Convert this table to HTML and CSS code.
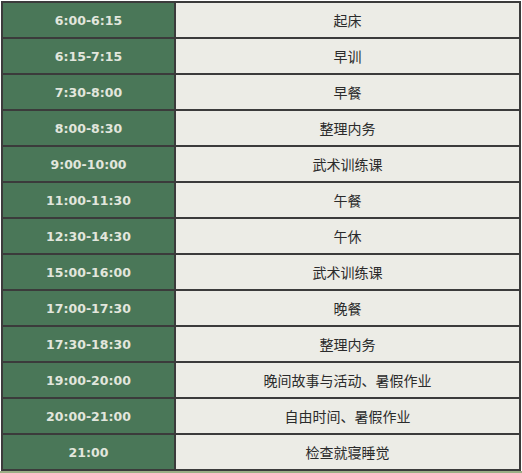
FILE: index.html
```html
<!DOCTYPE html>
<html lang="zh">
<head>
<meta charset="utf-8">
<link rel="stylesheet" href="styles.css">
</head>
<body>
<div class="page">
<table class="schedule">
<tbody>
<tr><td class="time">6:00-6:15</td><td class="act">起床</td></tr>
<tr><td class="time">6:15-7:15</td><td class="act">早训</td></tr>
<tr><td class="time">7:30-8:00</td><td class="act">早餐</td></tr>
<tr><td class="time">8:00-8:30</td><td class="act">整理内务</td></tr>
<tr><td class="time">9:00-10:00</td><td class="act">武术训练课</td></tr>
<tr><td class="time">11:00-11:30</td><td class="act">午餐</td></tr>
<tr><td class="time">12:30-14:30</td><td class="act">午休</td></tr>
<tr><td class="time">15:00-16:00</td><td class="act">武术训练课</td></tr>
<tr><td class="time">17:00-17:30</td><td class="act">晚餐</td></tr>
<tr><td class="time">17:30-18:30</td><td class="act">整理内务</td></tr>
<tr><td class="time">19:00-20:00</td><td class="act">晚间故事与活动、暑假作业</td></tr>
<tr><td class="time">20:00-21:00</td><td class="act">自由时间、暑假作业</td></tr>
<tr><td class="time">21:00</td><td class="act">检查就寝睡觉</td></tr>
</tbody>
</table>
<div class="strip"></div>
</div>
</body>
</html>
```
FILE: styles.css
```css
html, body {
  margin: 0;
  padding: 0;
  background: #ffffff;
}
.page {
  padding: 1px 0 0 1px;
}
.schedule {
  border-collapse: collapse;
  width: 520px;
  table-layout: fixed;
}
.schedule td {
  border: 2px solid #3b3b3b;
  height: 34px;
  padding: 0;
  text-align: center;
  vertical-align: middle;
}
.time {
  width: 171px;
  background: #4a7758;
  color: #e2e6dd;
  font-family: "DejaVu Sans", Verdana, sans-serif;
  font-weight: bold;
  font-size: 12.5px;
}
.act {
  background: #ecece6;
  color: #2b2b2b;
  font-family: "Noto Sans CJK SC", sans-serif;
  font-size: 14px;
}
.strip {
  height: 2px;
  margin-top: 0;
  margin-left: -1px;
  background: #9cae86;
}
```
